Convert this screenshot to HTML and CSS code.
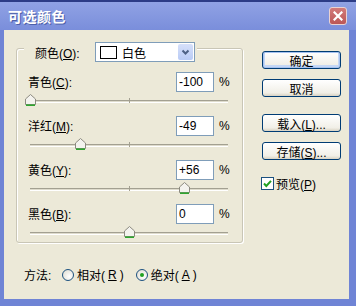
FILE: index.html
```html
<!DOCTYPE html>
<html lang="zh-CN">
<head>
     <meta charset="UTF-8">
     <title>可选颜色</title>
     <link rel="stylesheet" href="styles.css">
</head>
<body>
     <div class="window">
          <div class="titlebar">
               <span class="title">可选颜色</span>
               <span class="close">
                    <svg width="10" height="10" viewBox="0 0 10 10"><path d="M1.5 1.5 L8.5 8.5 M8.5 1.5 L1.5 8.5" stroke="#fff" stroke-width="2.2" stroke-linecap="square"/></svg>
               </span>
          </div>
          <div class="client">
               <div class="left">
                    <div class="group">
                         <div class="group-head">
                              <span class="head-label">颜色(<u>O</u>):</span>
                              <div class="select">
                                   <span class="swatch"></span>
                                   <span class="sel-text">白色</span>
                                   <span class="sel-arrow">
                                        <svg width="13" height="16" viewBox="0 0 13 16"><path d="M3.5 6.5 L6.5 9.5 L9.5 6.5" fill="none" stroke="#4d6185" stroke-width="2"/></svg>
                                   </span>
                              </div>
                         </div>
                         <div class="rows">
                              <div class="adj">
                                   <div class="adj-top"><span class="adj-label">青色(<u>C</u>):</span><span class="num">-100</span><span class="pct">%</span></div>
                                   <div class="slider"><div class="track"></div><span class="tick"></span><svg class="thumb" style="left:0%" width="11" height="12" viewBox="0 0 11 12"><path d="M5.5 0.5 L10.5 5 L10.5 10.5 L0.5 10.5 L0.5 5 Z" fill="#f4f3ee" stroke="#8c8a80"/><path d="M1 11.2 L10 11.2" stroke="#2fa52f" stroke-width="1.6"/></svg></div>
                              </div>
                              <div class="adj">
                                   <div class="adj-top"><span class="adj-label">洋红(<u>M</u>):</span><span class="num">-49</span><span class="pct">%</span></div>
                                   <div class="slider"><div class="track"></div><span class="tick"></span><svg class="thumb" style="left:25.5%" width="11" height="12" viewBox="0 0 11 12"><path d="M5.5 0.5 L10.5 5 L10.5 10.5 L0.5 10.5 L0.5 5 Z" fill="#f4f3ee" stroke="#8c8a80"/><path d="M1 11.2 L10 11.2" stroke="#2fa52f" stroke-width="1.6"/></svg></div>
                              </div>
                              <div class="adj">
                                   <div class="adj-top"><span class="adj-label">黄色(<u>Y</u>):</span><span class="num">+56</span><span class="pct">%</span></div>
                                   <div class="slider"><div class="track"></div><span class="tick"></span><svg class="thumb" style="left:78%" width="11" height="12" viewBox="0 0 11 12"><path d="M5.5 0.5 L10.5 5 L10.5 10.5 L0.5 10.5 L0.5 5 Z" fill="#f4f3ee" stroke="#8c8a80"/><path d="M1 11.2 L10 11.2" stroke="#2fa52f" stroke-width="1.6"/></svg></div>
                              </div>
                              <div class="adj">
                                   <div class="adj-top"><span class="adj-label">黑色(<u>B</u>):</span><span class="num">0</span><span class="pct">%</span></div>
                                   <div class="slider"><div class="track"></div><span class="tick"></span><svg class="thumb" style="left:50%" width="11" height="12" viewBox="0 0 11 12"><path d="M5.5 0.5 L10.5 5 L10.5 10.5 L0.5 10.5 L0.5 5 Z" fill="#f4f3ee" stroke="#8c8a80"/><path d="M1 11.2 L10 11.2" stroke="#2fa52f" stroke-width="1.6"/></svg></div>
                              </div>
                         </div>
                    </div>
                    <div class="method">
                         <span class="method-label">方法:</span>
                         <span class="opt"><span class="radio"></span>相对(<u>R</u>)</span>
                         <span class="opt"><span class="radio on"></span>绝对(<u>A</u>)</span>
                    </div>
               </div>
               <div class="right">
                    <button class="btn default">确定</button>
                    <button class="btn">取消</button>
                    <button class="btn gap">载入(<u>L</u>)...</button>
                    <button class="btn">存储(<u>S</u>)...</button>
                    <div class="check-row">
                         <span class="check">
                              <svg width="11" height="11" viewBox="0 0 11 11"><path d="M2 5.5 L4.3 8 L9 2.8" fill="none" stroke="#21a121" stroke-width="2"/></svg>
                         </span>
                         <span>预览(<u>P</u>)</span>
                    </div>
               </div>
          </div>
     </div>
</body>
</html>
```

FILE: styles.css
```css
*{
     padding:0;
     margin:0;
     box-sizing: border-box;
}
html,body{
     width:356px;
     height:306px;
     overflow:hidden;
}
body{
     font-family: "Liberation Sans", "Noto Sans CJK SC", sans-serif;
     font-size: 12px;
     color: #000;
}
u{text-decoration: underline; text-underline-offset: 1px;}

/* window frame */
.window{
     width: 356px;
     height: 306px;
     display: flex;
     flex-direction: column;
     background: #6f84d5;
     border-top: 2px solid #2c3c86;
}
.titlebar{
     height: 28px;
     display: flex;
     align-items: center;
     padding: 0 9px 0 8px;
     background: linear-gradient(#90a2e4, #7a8edb);
}
.title{
     color: #fff;
     font-weight: bold;
     font-size: 14px;
     letter-spacing: 0.5px;
     text-shadow: 1px 1px 0 #4d5fa8;
}
.close{
     margin-left: auto;
     width: 18px;
     height: 18px;
     border: 1px solid #e9d2d2;
     border-radius: 3px;
     background: linear-gradient(#d27b7b, #bb5656);
     display: flex;
     justify-content: center;
     align-items: center;
}
.client{
     flex: 1;
     margin: 0 7px 7px 4px;
     background: #ece9d8;
     display: flex;
     padding: 18px 0 0 12px;
}

/* left column */
.left{width: 227px;}
.group{
     border: 1px solid #c9c6b6;
     border-radius: 3px;
     box-shadow: 1px 1px 0 #fff, inset 1px 1px 0 #fff;
}
.group-head{
     display: flex;
     align-items: center;
     width: fit-content;
     height: 20px;
     margin: -7px 0 9px 7px;
     padding: 0 2px 0 11px;
     background: #ece9d8;
}
.head-label{width: 60px;}
.select{
     width: 100px;
     height: 20px;
     border: 1px solid #7f9db9;
     background: #fff;
     display: flex;
     align-items: center;
     padding: 0 1px 0 4px;
}
.swatch{
     width: 17px;
     height: 13px;
     border: 1px solid #000;
     background: #fff;
}
.sel-text{margin-left: 5px; flex: 1;}
.sel-arrow{
     width: 15px;
     height: 16px;
     border-radius: 2px;
     background: linear-gradient(#d6e0fa, #b9cbf5);
     display: flex;
     justify-content: center;
}
.rows{
     display: flex;
     flex-direction: column;
     gap: 5px;
}
.adj-top{
     height: 21px;
     display: flex;
     align-items: center;
     padding: 0 13px 0 11px;
}
.adj-label{flex: 1;}
.num{
     width: 38px;
     height: 20px;
     border: 1px solid #7f9db9;
     background: #fff;
     padding-left: 2px;
     line-height: 18px;
}
.pct{margin-left: 5px; width: 10px;}
.slider{
     position: relative;
     height: 18px;
     margin: 0 14px 0 13px;
     padding-top: 8px;
}
.track{
     height: 3px;
     border-top: 1px solid #a3a091;
     border-bottom: 1px solid #fff;
     background: #dedbcc;
}
.tick{
     position: absolute;
     left: 50%;
     top: 6px;
     width: 1px;
     height: 5px;
     background: #a3a091;
}
.thumb{
     position: absolute;
     top: 2px;
     margin-left: -5px;
}
.method{
     margin-top: 23px;
     height: 17px;
     display: flex;
     align-items: center;
     padding-left: 8px;
}
.method-label{width: 38px;}
.opt{
     display: flex;
     align-items: center;
     gap: 3px;
     margin-right: 12px;
}
.radio{
     width: 12px;
     height: 12px;
     border: 1px solid #1c5180;
     border-radius: 50%;
     background: radial-gradient(circle at 65% 65%, #fff, #dcd9cd);
     display: flex;
     justify-content: center;
     align-items: center;
}
.radio.on:after{
     content: "";
     width: 4px;
     height: 4px;
     border-radius: 50%;
     background: #21a121;
}

/* right column */
.right{
     margin-left: 19px;
     padding-top: 3px;
     display: flex;
     flex-direction: column;
     align-items: flex-start;
}
.btn{
     width: 79px;
     height: 18px;
     border: 1px solid #003c74;
     border-radius: 3px;
     background: linear-gradient(#fff, #f1efe7 80%, #d8d2c2);
     font-family: inherit;
     font-size: 12px;
     color: #000;
     margin-bottom: 10px;
}
.btn.default{box-shadow: inset 0 0 0 1px #a6c2f0, inset 0 -1px 0 2px #c5d7f5;}
.btn.gap{margin-top: 7px;}
.check-row{
     margin-top: 5px;
     margin-left: -1px;
     display: flex;
     align-items: center;
     gap: 2px;
}
.check{
     width: 13px;
     height: 13px;
     border: 1px solid #1c5180;
     background: #fff;
     display: flex;
     justify-content: center;
     align-items: center;
}
```
